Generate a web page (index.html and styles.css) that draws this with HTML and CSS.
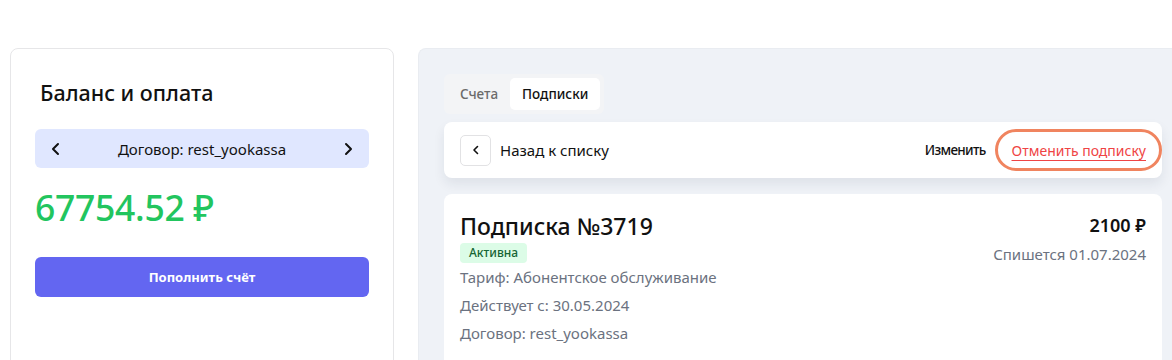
FILE: index.html
```html
<!DOCTYPE html>
<html lang="ru">
<head>
<meta charset="utf-8">
<title>Баланс и подписки</title>
<link rel="stylesheet" href="styles.css">
</head>
<body>
	<div class="page">
		<div class="balance">
			<h2 class="balance-title">Баланс и оплата</h2>
			<div class="contract">
				<svg class="chev" width="14" height="14" viewBox="0 0 14 14"><path d="M9 2 L4 7 L9 12" /></svg>
				<span>Договор: rest_yookassa</span>
				<svg class="chev" width="14" height="14" viewBox="0 0 14 14"><path d="M5 2 L10 7 L5 12" /></svg>
			</div>
			<div class="amount">67754.52 ₽</div>
			<div class="pay-btn">Пополнить счёт</div>
		</div>

		<div class="panel">
			<ul class="tabs">
				<li>Счета</li>
				<li class="active">Подписки</li>
			</ul>

			<div class="bar">
				<div class="back">
					<div class="back-btn">
						<svg width="10" height="10" viewBox="0 0 10 10"><path d="M6.5 1.5 L3 5 L6.5 8.5" /></svg>
					</div>
					<span>Назад к списку</span>
				</div>
				<div class="actions">
					<span class="edit">Изменить</span>
					<span class="cancel">Отменить подписку</span>
				</div>
			</div>

			<div class="sub">
				<div class="sub-main">
					<h3 class="sub-title">Подписка №3719</h3>
					<span class="badge">Активна</span>
					<p class="sub-line">Тариф: Абонентское обслуживание</p>
					<p class="sub-line">Действует с: 30.05.2024</p>
					<p class="sub-line">Договор: rest_yookassa</p>
				</div>
				<div class="sub-side">
					<div class="price">2100 ₽</div>
					<div class="next">Спишется 01.07.2024</div>
				</div>
			</div>
		</div>
	</div>
</body>
</html>
```

FILE: styles.css
```css
html, body{margin: 0;padding: 0;}
body{
	background: #fff;
	font-family: "Noto Sans", "Open Sans", sans-serif;
	color: #111;
	overflow: hidden;
	height: 360px;
}
h2, h3, p, ul{margin: 0;padding: 0;}
li{list-style: none;}

.page{
	display: flex;
	align-items: flex-start;
	gap: 24px;
	padding: 48px 0 0 10px;
}

/* левая карточка */
.balance{
	width: 334px;
	height: 330px;
	flex: none;
	padding: 24px 24px 0;
	border: 1px solid #e6e6e8;
	border-radius: 8px;
	background: #fff;
}
.balance-title{
	font-size: 21.5px;
	font-weight: 500;
	line-height: 28px;
	padding: 6px 0 0 5px;
	margin-bottom: 22px;
	color: #111;
}
.contract{
	display: flex;
	align-items: center;
	justify-content: space-between;
	height: 39px;
	padding: 0 14px;
	border-radius: 6px;
	background: #e0e7ff;
	font-size: 15px;
}
.contract .chev path{
	fill: none;
	stroke: #111;
	stroke-width: 2;
	stroke-linecap: round;
	stroke-linejoin: round;
}
.amount{
	font-size: 35.5px;
	font-weight: 500;
	line-height: 50px;
	margin: 14px 0 0;
	color: #22c55e;
	letter-spacing: -0.3px;
}
.pay-btn{
	height: 40px;
	line-height: 40px;
	margin-top: 25px;
	border-radius: 6px;
	background: #6366f1;
	color: #fff;
	text-align: center;
	font-size: 13px;
	font-weight: 700;
}

/* правая панель */
.panel{
	width: 718px;
	height: 330px;
	flex: none;
	padding: 25px 25px 0;
	border: 1px solid #e9ecf1;
	border-right: none;
	border-radius: 8px 0 0 0;
	background: #eff2f7;
}
.tabs{
	display: inline-flex;
	padding: 4px;
	border-radius: 6px;
	background: #f3f4f6;
}
.tabs li{
	height: 32px;
	line-height: 32px;
	padding: 0 12px;
	border-radius: 5px;
	font-size: 13.5px;
	font-weight: 500;
	color: #6b6b6b;
}
.tabs li.active{
	background: #fff;
	color: #111;
}

.bar{
	display: flex;
	align-items: center;
	justify-content: space-between;
	height: 56px;
	margin-top: 8px;
	padding: 0 16px;
	border-radius: 8px;
	background: #fff;
	box-shadow: 0 6px 12px rgba(30, 40, 60, 0.08);
}
.back{
	display: flex;
	align-items: center;
	gap: 9px;
	font-size: 15px;
}
.back-btn{
	display: flex;
	align-items: center;
	justify-content: center;
	width: 29px;
	height: 29px;
	border: 1px solid #e2e2e4;
	border-radius: 5px;
}
.back-btn path{
	fill: none;
	stroke: #111;
	stroke-width: 1.6;
	stroke-linecap: round;
	stroke-linejoin: round;
}
.actions{
	display: flex;
	align-items: center;
	gap: 26px;
	font-size: 14px;
}
.edit{
	font-size: 13.5px;
	font-weight: 500;
	letter-spacing: -0.7px;
	color: #111;
}
.cancel{
	position: relative;
	color: #ef4444;
	text-decoration: underline;
	text-underline-offset: 4px;
}
/* обводка-пометка поверх ссылки */
.cancel::after{
	content: "";
	position: absolute;
	left: -17px;
	right: -16px;
	top: -12px;
	bottom: -11px;
	border: 3px solid #f0845f;
	border-radius: 22px;
}

.sub{
	display: flex;
	justify-content: space-between;
	align-items: flex-start;
	height: 200px;
	margin-top: 16px;
	padding: 18px 16px 0;
	border-radius: 8px;
	background: #fff;
}
.sub-title{
	font-size: 23px;
	font-weight: 500;
	line-height: 28px;
	color: #111;
}
.badge{
	display: inline-block;
	height: 20px;
	line-height: 20px;
	padding: 0 9px;
	border-radius: 4px;
	background: #dcfce7;
	color: #166534;
	font-size: 12px;
	font-weight: 500;
}
.sub-line{
	font-size: 15px;
	line-height: 28px;
	color: #6b7280;
}
.sub-side{
	text-align: right;
}
.price{
	font-size: 18px;
	font-weight: 600;
	line-height: 26px;
	color: #111;
}
.next{
	margin-top: 4px;
	font-size: 15px;
	line-height: 24px;
	color: #6b7280;
}
```
